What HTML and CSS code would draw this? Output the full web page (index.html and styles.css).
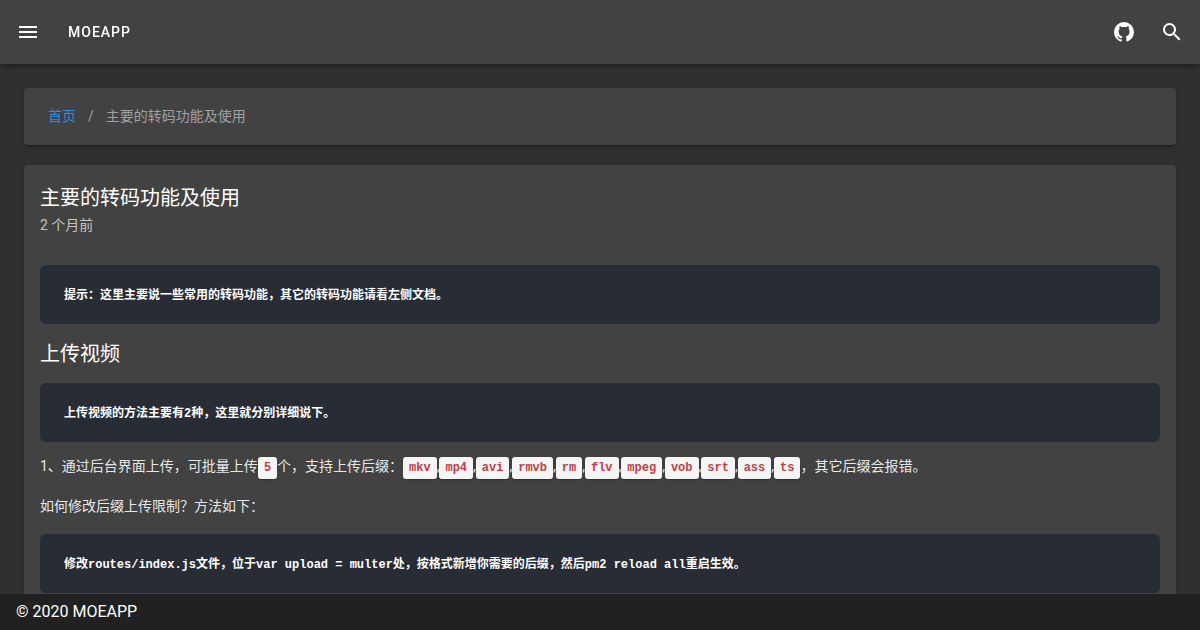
FILE: index.html
```html
<!DOCTYPE html>
<html lang="zh-CN">
<head>
    <meta charset="UTF-8">
    <meta name="viewport" content="width=device-width, initial-scale=1.0">
    <title>主要的转码功能及使用 - MOEAPP</title>
    <link rel="stylesheet" href="styles.css">
</head>
<body>
    <header class="app-bar">
        <button class="icon-btn" type="button" aria-label="菜单">
            <svg viewBox="0 0 24 24"><path d="M3,6H21V8H3V6M3,11H21V13H3V11M3,16H21V18H3V16Z"/></svg>
        </button>
        <a class="brand" href="#">MOEAPP</a>
        <div class="spacer"></div>
        <a class="icon-btn" href="#" aria-label="GitHub">
            <svg viewBox="0 0 24 24"><path d="M12,2A10,10 0 0,0 2,12C2,16.42 4.87,20.17 8.84,21.5C9.5,21.6 9.8,21.3 9.8,20.8V19.3C7.4,19.8 6.6,18.7 6.1,17.8C5.7,17 5.2,16.5 4.7,16.2C5.8,15.9 6.6,16.6 7.1,17.3C7.8,18.3 8.7,18.4 9.8,18C9.9,17.3 10.2,16.7 10.5,16.4C8.4,16.1 6.6,14.9 6.6,11.6C6.6,10.6 6.9,9.8 7.5,9.1C7.2,8.2 7.2,7.2 7.6,6.2C8.6,6.2 9.5,6.8 10.1,7.3C11.4,7 12.8,7 14.1,7.3C14.7,6.8 15.6,6.2 16.6,6.2C17,7.2 17,8.2 16.7,9.1C17.3,9.8 17.6,10.6 17.6,11.6C17.6,14.9 15.8,16.1 13.6,16.4C14.1,16.8 14.4,17.4 14.4,18.3V20.8C14.4,21.3 14.7,21.6 15.17,21.5C19.14,20.16 22,16.42 22,12A10,10 0 0,0 12,2Z"/></svg>
        </a>
        <button class="icon-btn" type="button" aria-label="搜索">
            <svg viewBox="0 0 24 24"><path d="M9.5,3A6.5,6.5 0 0,1 16,9.5C16,11.11 15.41,12.59 14.44,13.73L14.71,14H15.5L20.5,19L19,20.5L14,15.5V14.71L13.73,14.44C12.59,15.41 11.11,16 9.5,16A6.5,6.5 0 0,1 3,9.5A6.5,6.5 0 0,1 9.5,3M9.5,5C7,5 5,7 5,9.5C5,12 7,14 9.5,14C12,14 14,12 14,9.5C14,7 12,5 9.5,5Z"/></svg>
        </button>
    </header>

    <main class="content">
        <nav class="card breadcrumbs">
            <a href="#">首页</a>
            <span>/</span>
            <span>主要的转码功能及使用</span>
        </nav>

        <article class="card article">
            <h1>主要的转码功能及使用</h1>
            <div class="date">2 个月前</div>

            <pre><code>提示：这里主要说一些常用的转码功能，其它的转码功能请看左侧文档。</code></pre>
            <h2>上传视频</h2>
            <pre><code>上传视频的方法主要有2种，这里就分别详细说下。</code></pre>
            <p>1、通过后台界面上传，可批量上传<code>5</code>个，支持上传后缀：<code>mkv</code>,<code>mp4</code>,<code>avi</code>,<code>rmvb</code>,<code>rm</code>,<code>flv</code>,<code>mpeg</code>,<code>vob</code>,<code>srt</code>,<code>ass</code>,<code>ts</code>，其它后缀会报错。</p>
            <p>如何修改后缀上传限制？方法如下：</p>
            <pre><code>修改routes/index.js文件，位于var upload = multer处，按格式新增你需要的后缀，然后pm2 reload all重启生效。</code></pre>
        </article>
    </main>

    <footer class="footer">© 2020 MOEAPP</footer>
</body>
</html>
```
FILE: styles.css
```css
* {
    box-sizing: border-box;
}

body {
    margin: 0;
    padding: 64px 0 36px;
    background-color: #303030;
    color: #fff;
    font-family: Roboto, "Noto Sans CJK SC", sans-serif;
    font-size: 16px;
    line-height: 24px;
}

a {
    text-decoration: none;
}

/* top bar */
.app-bar {
    position: fixed;
    top: 0;
    left: 0;
    right: 0;
    z-index: 5;
    display: flex;
    align-items: center;
    height: 64px;
    padding: 0 4px;
    background-color: #424242;
    box-shadow: 0 2px 4px -1px rgba(0, 0, 0, 0.2), 0 4px 5px rgba(0, 0, 0, 0.14), 0 1px 10px rgba(0, 0, 0, 0.12);
}

.icon-btn {
    display: flex;
    align-items: center;
    justify-content: center;
    width: 48px;
    height: 48px;
    padding: 0;
    border: none;
    border-radius: 50%;
    background: none;
    color: #fff;
    cursor: pointer;
}

.icon-btn svg {
    width: 24px;
    height: 24px;
    fill: currentColor;
}

.brand {
    padding: 0 16px;
    color: #fff;
    font-size: 14px;
    font-weight: 500;
    letter-spacing: 1px;
}

.spacer {
    flex: 1;
}

/* page */
.content {
    padding: 24px;
}

.card {
    border-radius: 4px;
    background-color: #424242;
    box-shadow: 0 3px 1px -2px rgba(0, 0, 0, 0.2), 0 2px 2px rgba(0, 0, 0, 0.14), 0 1px 5px rgba(0, 0, 0, 0.12);
}

.breadcrumbs {
    display: flex;
    gap: 12px;
    margin-bottom: 20px;
    padding: 18px 24px;
    color: rgba(255, 255, 255, 0.5);
    font-size: 14px;
    line-height: 21px;
}

.breadcrumbs a {
    color: #2b8fdc;
}

.article {
    padding: 16px;
    font-size: 14px;
}

h1,
h2 {
    margin: 0;
    font-size: 20px;
    font-weight: 400;
    line-height: 34px;
}

h2 {
    padding-top: 1px;
}

.date {
    margin-bottom: 30px;
    color: rgba(255, 255, 255, 0.7);
    line-height: 20px;
}

pre {
    margin: 12px 0;
    padding: 22px 24px 18px;
    border-radius: 6px;
    background-color: #282c34;
    line-height: 19px;
    overflow: auto;
}

code {
    font-family: "Liberation Mono", "Noto Sans CJK SC", monospace;
    font-size: 12px;
    font-weight: 700;
}

pre code {
    display: block;
}

p {
    margin: 0 0 16px;
    color: rgba(255, 255, 255, 0.9);
}

p code {
    padding: 4px 6px;
    border-radius: 3px;
    background-color: #f5f5f5;
    color: #bd4147;
    line-height: 12px;
    box-shadow: 0 2px 1px -1px rgba(0, 0, 0, 0.2), 0 1px 3px rgba(0, 0, 0, 0.12);
}

.footer {
    position: fixed;
    bottom: 0;
    left: 0;
    right: 0;
    padding: 6px 16px;
    background-color: #212121;
}
```
